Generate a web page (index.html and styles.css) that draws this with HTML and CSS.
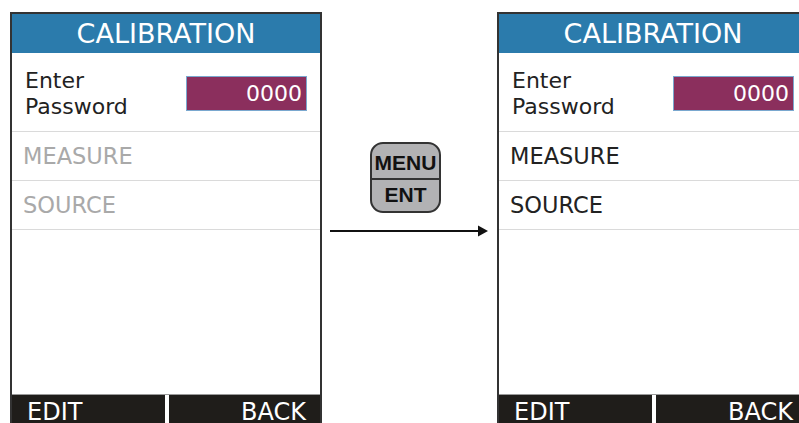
FILE: index.html
```html
<!DOCTYPE html>
<html>
<head>
<meta charset="utf-8">
<link rel="stylesheet" href="styles.css">
</head>
<body>
<div class="stage">
  <div class="panel">
    <div class="header">CALIBRATION</div>
    <div class="row row-pass">
      <div class="label">Enter<br>Password</div>
      <div class="pass">0000</div>
    </div>
    <div class="row item disabled">MEASURE</div>
    <div class="row item disabled">SOURCE</div>
    <div class="blank"></div>
    <div class="bar">
      <div class="soft left">EDIT</div>
      <div class="soft right">BACK</div>
    </div>
  </div>

  <div class="middle">
    <div class="key">
      <div class="key-top">MENU</div>
      <div class="key-bot">ENT</div>
    </div>
    <svg class="arrow" width="175" height="14" viewBox="0 0 175 14">
      <line x1="8" y1="7" x2="158" y2="7" stroke="#111" stroke-width="2"/>
      <polygon points="156,1.5 166,7 156,12.5" fill="#111"/>
    </svg>
  </div>

  <div class="panel">
    <div class="header">CALIBRATION</div>
    <div class="row row-pass">
      <div class="label">Enter<br>Password</div>
      <div class="pass">0000</div>
    </div>
    <div class="row item">MEASURE</div>
    <div class="row item">SOURCE</div>
    <div class="blank"></div>
    <div class="bar">
      <div class="soft left">EDIT</div>
      <div class="soft right">BACK</div>
    </div>
  </div>
</div>
</body>
</html>
```

FILE: styles.css
```css
html, body {
  margin: 0;
  padding: 0;
  background: #fff;
  overflow: hidden;
  width: 799px;
  height: 423px;
}
.stage {
  display: flex;
  align-items: flex-start;
  padding: 12px 0 0 10px;
  font-family: "DejaVu Sans", Verdana, sans-serif;
  color: #222;
}
.panel {
  flex: none;
  width: 308px;
  height: 411px;
  border: 2px solid #333;
  border-bottom: none;
  display: flex;
  flex-direction: column;
  background: #fff;
}
.header {
  height: 39px;
  line-height: 39px;
  background: #2b7bac;
  color: #fff;
  font-size: 27px;
  text-align: center;
}
.row {
  border-bottom: 1px solid #dadada;
}
.row-pass {
  height: 78px;
  display: flex;
  justify-content: space-between;
  align-items: flex-start;
  padding: 0 13px 0 13px;
}
.label {
  font-size: 22px;
  line-height: 26px;
  padding-top: 15px;
}
.pass {
  margin-top: 23px;
  width: 115px;
  height: 33px;
  line-height: 33px;
  border: 1px solid #7aa8cf;
  background: #8b2f5d;
  color: #fff;
  font-size: 22px;
  text-align: right;
  padding-right: 4px;
}
.item {
  height: 48px;
  line-height: 48px;
  font-size: 22.5px;
  padding-left: 11px;
}
.disabled {
  color: #a9a9a9;
}
.blank {
  height: 164px;
}
.bar {
  height: 30px;
  display: flex;
  gap: 4px;
  background: #fff;
  border-top: 1px solid #9a9a9a;
}
.soft {
  flex: 1;
  background: #1f1d1a;
  color: #fff;
  font-size: 24px;
  line-height: 34px;
  height: 30px;
  overflow: visible;
}
.soft.left {
  padding-left: 15px;
}
.soft.right {
  text-align: right;
  padding-right: 14px;
}
.middle {
  flex: none;
  width: 175px;
  display: flex;
  flex-direction: column;
}
.key {
  margin: 130px 0 0 48px;
  width: 67px;
  height: 67px;
  border: 2px solid #333;
  border-radius: 13px;
  background: #b2b2b4;
  display: flex;
  flex-direction: column;
  font-family: "Liberation Sans", Arial, sans-serif;
  font-weight: bold;
  color: #111;
  font-size: 21px;
  text-align: center;
  overflow: hidden;
}
.key-top {
  height: 34px;
  line-height: 38px;
  border-bottom: 2px solid #333;
}
.key-bot {
  flex: 1;
  line-height: 30px;
}
.arrow {
  display: block;
  margin-top: 11px;
}
```
